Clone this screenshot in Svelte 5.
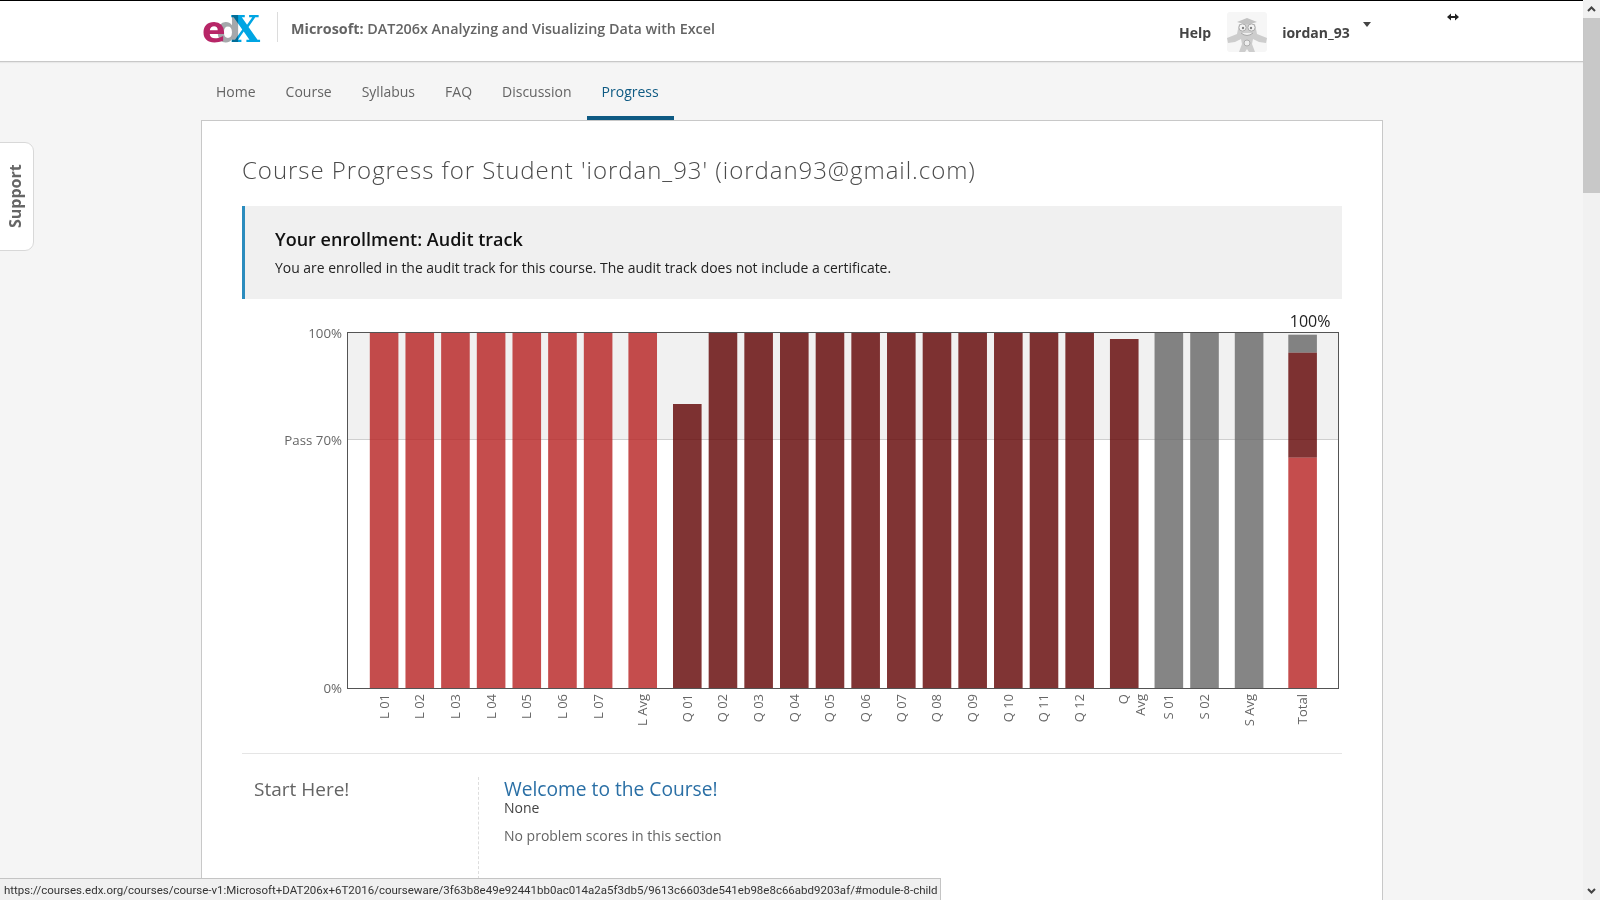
<script lang="ts">
  const tabs = ['Home', 'Course', 'Syllabus', 'FAQ', 'Discussion', 'Progress'];

  const RED = '#b72121';
  const DARK = '#600101';
  const GRAY = '#666666';

  // chart geometry, in svg coordinates (svg sits at 241,309 on the page)
  const plot = { left: 105.5, right: 1096.5, top: 23.5, bottom: 379.5, pass: 130.5 };
  const x0 = 127.8;
  const unit = 35.67;
  const barW = 28.6;

  const bars: { label: string[]; pos: number; color: string; top: number }[] = [];
  for (let i = 0; i < 7; i++) bars.push({ label: [`L 0${i + 1}`], pos: i, color: RED, top: 23.5 });
  bars.push({ label: ['L Avg'], pos: 7.25, color: RED, top: 23.5 });
  for (let i = 0; i < 12; i++) {
    const n = String(i + 1).padStart(2, '0');
    bars.push({ label: [`Q ${n}`], pos: 8.5 + i, color: DARK, top: i === 0 ? 95 : 23.5 });
  }
  bars.push({ label: ['Q', 'Avg'], pos: 20.75, color: DARK, top: 30 });
  bars.push({ label: ['S 01'], pos: 22, color: GRAY, top: 23.5 });
  bars.push({ label: ['S 02'], pos: 23, color: GRAY, top: 23.5 });
  bars.push({ label: ['S Avg'], pos: 24.25, color: GRAY, top: 23.5 });

  const totalX = x0 + 25.75 * unit;
  const totalParts = [
    { color: GRAY, top: 25.7, bottom: 43.7 },
    { color: DARK, top: 43.7, bottom: 148.7 },
    { color: RED, top: 148.7, bottom: 379.5 }
  ];
</script>

<div class="page">
  <div class="main">
    <header class="topbar">
      <svg class="logo" width="62" height="50" viewBox="0 0 62 50" aria-label="edX">
        <text class="logo-d" x="14" y="37">d</text>
        <text class="logo-e" x="0" y="37">e</text>
        <text class="logo-x" x="29" y="37">X</text>
      </svg>
      <span class="sep"></span>
      <h1 class="course"><b>Microsoft:</b> DAT206x Analyzing and Visualizing Data with Excel</h1>
      <nav class="user">
        <span class="help">Help</span>
        <svg class="avatar" width="40" height="40" viewBox="0 0 40 40">
          <rect width="40" height="40" rx="3" fill="#f6f6f6" />
          <g fill="#cdcdcd">
            <path d="M20 6 L30 10 L20 13 L10 10 Z" fill="#c2c2c2" />
            <path d="M12 12 h16 l2 10 l10 4 l-1 5 l-7 -1 l-6 -3 l-1 5 l3 8 h-6 l-2 -3 l-2 3 h-6 l3 -8 l-1 -5 l-6 3 l-7 1 l-1 -5 l10 -4 Z" />
          </g>
          <circle cx="15.5" cy="15.5" r="3.6" fill="#f4f4f4" stroke="#adadad" />
          <circle cx="24.5" cy="15.5" r="3.6" fill="#f4f4f4" stroke="#adadad" />
          <circle cx="16" cy="16" r="1.2" fill="#808080" />
          <circle cx="24" cy="16" r="1.2" fill="#808080" />
          <path d="M14 21 q6 5 12 0" fill="#f0f0f0" stroke="#a8a8a8" />
          <circle cx="20" cy="31" r="3" fill="#eee" stroke="#adadad" />
        </svg>
        <span class="name">iordan_93</span>
        <span class="caret"></span>
      </nav>
      <svg class="cursor" width="12" height="8" viewBox="0 0 12 8">
        <path d="M0 4 L4 0.5 V3 H8 V0.5 L12 4 L8 7.5 V5 H4 V7.5 Z" fill="#222" />
      </svg>
    </header>

    <nav class="tabs">
      {#each tabs as tab}
        <span class="tab" class:active={tab === 'Progress'}>{tab}</span>
      {/each}
    </nav>

    <section class="card">
      <h2 class="title">Course Progress for Student 'iordan_93' (iordan93@gmail.com)</h2>

      <div class="banner">
        <h3>Your enrollment: Audit track</h3>
        <p>You are enrolled in the audit track for this course. The audit track does not include a certificate.</p>
      </div>

      <svg class="chart" width="1101" height="420" viewBox="0 0 1101 420">
        <rect x={plot.left} y={plot.top} width={plot.right - plot.left} height={plot.pass - plot.top} fill="#f1f1f1" />
        <line x1={plot.left} x2={plot.right} y1={plot.pass} y2={plot.pass} stroke="#cfcfcf" />

        {#each bars as bar}
          <rect
            x={x0 + bar.pos * unit}
            y={bar.top}
            width={barW}
            height={plot.bottom - bar.top}
            fill={bar.color}
            fill-opacity="0.8"
          />
        {/each}
        {#each totalParts as part}
          <rect x={totalX} y={part.top} width={barW} height={part.bottom - part.top} fill={part.color} fill-opacity="0.8" />
        {/each}

        <rect x={plot.left} y={plot.top} width={plot.right - plot.left} height={plot.bottom - plot.top} fill="none" stroke="#545454" />

        <text class="axis" x="100" y="29" text-anchor="end">100%</text>
        <text class="axis" x="100" y="136" text-anchor="end">Pass 70%</text>
        <text class="axis" x="100" y="384" text-anchor="end">0%</text>
        <text class="total" x={totalX + barW / 2 + 7.5} y="17.5" text-anchor="middle">100%</text>

        {#each bars as bar}
          {@const cx = x0 + bar.pos * unit + barW / 2}
          {#if bar.label.length === 1}
            <text class="tick" transform="translate({cx + 4.5} 385) rotate(-90)" text-anchor="end">{bar.label[0]}</text>
          {:else}
            <text class="tick" transform="translate({cx + 4} 385) rotate(-90)" text-anchor="end">{bar.label[0]}</text>
            <text class="tick" transform="translate({cx + 20.5} 385) rotate(-90)" text-anchor="end">{bar.label[1]}</text>
          {/if}
        {/each}
        <text class="tick" transform="translate({totalX + barW / 2 + 4.5} 385) rotate(-90)" text-anchor="end">Total</text>
      </svg>

      <div class="chapter">
        <h4 class="chapter-name">Start Here!</h4>
        <div class="sections">
          <a class="section-name" href="#welcome">Welcome to the Course!</a>
          <div class="section-due">None</div>
          <div class="section-note">No problem scores in this section</div>
        </div>
      </div>
    </section>
  </div>

  <div class="scrollbar">
    <svg class="arrow" width="17" height="18" viewBox="0 0 17 18"><path d="M5 11 L8.5 7.5 L12 11" fill="none" stroke="#444" stroke-width="2" /></svg>
    <div class="thumb"></div>
    <div class="track"></div>
    <svg class="arrow" width="17" height="18" viewBox="0 0 17 18"><path d="M5 7 L8.5 10.5 L12 7" fill="none" stroke="#444" stroke-width="2" /></svg>
  </div>

  <button class="support">Support</button>
  <div class="status">https://courses.edx.org/courses/course-v1:Microsoft+DAT206x+6T2016/courseware/3f63b8e49e92441bb0ac014a2a5f3db5/9613c6603de541eb98e8c66abd9203af/#module-8-child</div>
</div>

<style>
  :global(body) {
    margin: 0;
    overflow: hidden;
    background: #f5f5f5;
    font-family: 'Open Sans', 'Noto Sans', sans-serif;
  }

  .page {
    position: relative;
    display: flex;
    height: 900px;
    overflow: hidden;
  }

  .main {
    flex: 1;
    min-width: 0;
    display: flex;
    flex-direction: column;
    background: #f5f5f5;
  }

  .topbar {
    position: relative;
    display: flex;
    align-items: center;
    flex: none;
    box-sizing: border-box;
    height: 62px;
    padding: 0 0 3px 202px;
    background: #fff;
    border-top: 1px solid #000;
    border-bottom: 1px solid #c8c8c8;
    box-shadow: 0 1px 1px rgba(0, 0, 0, 0.05);
  }

  .logo text {
    font-size: 35px;
  }

  .logo-e {
    font-family: 'DejaVu Sans', sans-serif;
    font-weight: 700;
    fill: #b72667;
  }

  .logo-d {
    font-family: 'DejaVu Sans', sans-serif;
    font-weight: 700;
    fill: #a5a8ab;
  }

  .logo .logo-x {
    font-family: 'DejaVu Serif', serif;
    font-weight: 700;
    font-size: 37.5px;
    fill: #00a5e3;
    mix-blend-mode: multiply;
  }

  .sep {
    width: 1px;
    height: 30px;
    margin: -6px 13px 0 13px;
    background: #dcdcdc;
  }

  .course {
    margin: -3px 0 0;
    font-size: 14.35px;
    font-weight: 600;
    color: #646464;
  }

  .course b {
    font-weight: 700;
  }

  .user {
    position: absolute;
    top: 11px;
    left: 1179px;
    display: flex;
    align-items: center;
    height: 40px;
  }

  .help {
    margin-right: 16px;
    font-size: 14px;
    font-weight: 700;
    color: #444;
  }

  .avatar {
    margin-top: -1px;
  }

  .name {
    margin-left: 15px;
    font-size: 14px;
    font-weight: 700;
    color: #444;
  }

  .caret {
    align-self: flex-start;
    margin: 10px 0 0 13px;
    border-left: 4.5px solid transparent;
    border-right: 4.5px solid transparent;
    border-top: 5px solid #444;
  }

  .cursor {
    position: absolute;
    top: 12px;
    left: 1447px;
  }

  .tabs {
    display: flex;
    flex: none;
    height: 58px;
    padding-left: 201px;
  }

  .tab {
    box-sizing: border-box;
    padding: 20px 15px 0;
    font-size: 14px;
    color: #646464;
  }

  .tab.active {
    color: #0e5a83;
    border-bottom: 4px solid #0e5a83;
  }

  .card {
    box-sizing: border-box;
    flex: 1;
    width: 1182px;
    margin-left: 201px;
    padding: 31px 40px 0;
    background: #fff;
    border: 1px solid #c8c8c8;
    border-bottom: 0;
  }

  .title {
    margin: 0 0 18px;
    font-size: 24px;
    line-height: 36px;
    font-weight: 300;
    letter-spacing: 0.96px;
    color: #4a4a4a;
  }

  .banner {
    box-sizing: border-box;
    height: 93px;
    padding: 21px 30px 0;
    background: #f0f0f0;
    border-left: 3px solid #2b8cbe;
  }

  .banner h3 {
    margin: 0 0 7px;
    font-size: 18px;
    line-height: 24px;
    font-weight: 600;
    color: #111;
  }

  .banner p {
    margin: 0;
    font-size: 13.95px;
    line-height: 20px;
    color: #222;
  }

  .chart {
    display: block;
    margin-top: 10px;
    height: 420px;
  }

  .axis {
    font-size: 13.3px;
    fill: #666;
  }

  .total {
    font-size: 16px;
    fill: #222;
  }

  .tick {
    font-size: 13px;
    fill: #666;
  }

  .chapter {
    display: grid;
    grid-template-columns: 236px 1fr;
    height: 125px;
    margin-top: 24px;
    border-top: 1px solid #e5e5e5;
  }

  .chapter-name {
    margin: 22px 0 0 12px;
    font-size: 19px;
    line-height: 26px;
    font-weight: 400;
    color: #646464;
  }

  .sections {
    margin-top: 23px;
    padding: 2px 0 0 25px;
    border-left: 1px dashed #ddd;
  }

  .section-name {
    display: block;
    font-size: 19.2px;
    line-height: 20px;
    color: #2a6fa5;
    text-decoration: none;
  }

  .section-due {
    font-size: 14px;
    line-height: 17px;
    color: #444;
  }

  .section-note {
    margin-top: 10px;
    font-size: 14px;
    line-height: 20px;
    color: #646464;
  }

  .scrollbar {
    display: flex;
    flex-direction: column;
    flex: none;
    width: 17px;
    background: #f1f1f1;
  }

  .arrow {
    display: block;
    flex: none;
  }

  .thumb {
    flex: none;
    height: 175px;
    background: #c8c8c8;
  }

  .track {
    flex: 1;
  }

  .support {
    position: absolute;
    top: 142px;
    left: -1px;
    box-sizing: border-box;
    width: 35px;
    height: 109px;
    padding: 0 0 0 2px;
    background: #fff;
    border: 1px solid #d8d8d8;
    border-radius: 9px 0 0 9px;
    font-family: inherit;
    font-size: 16px;
    font-weight: 700;
    color: #666;
    writing-mode: vertical-rl;
    transform: rotate(180deg);
  }

  .status {
    position: absolute;
    left: 0;
    bottom: 0;
    box-sizing: border-box;
    width: 941px;
    height: 22px;
    padding: 3px 0 0 4px;
    background: #f0f0f0;
    border: 1px solid #c4c4c4;
    border-left: 0;
    border-bottom: 0;
    font-family: Roboto, sans-serif;
    font-size: 11.5px;
    line-height: 16px;
    color: #333;
    white-space: nowrap;
    overflow: hidden;
  }
</style>
